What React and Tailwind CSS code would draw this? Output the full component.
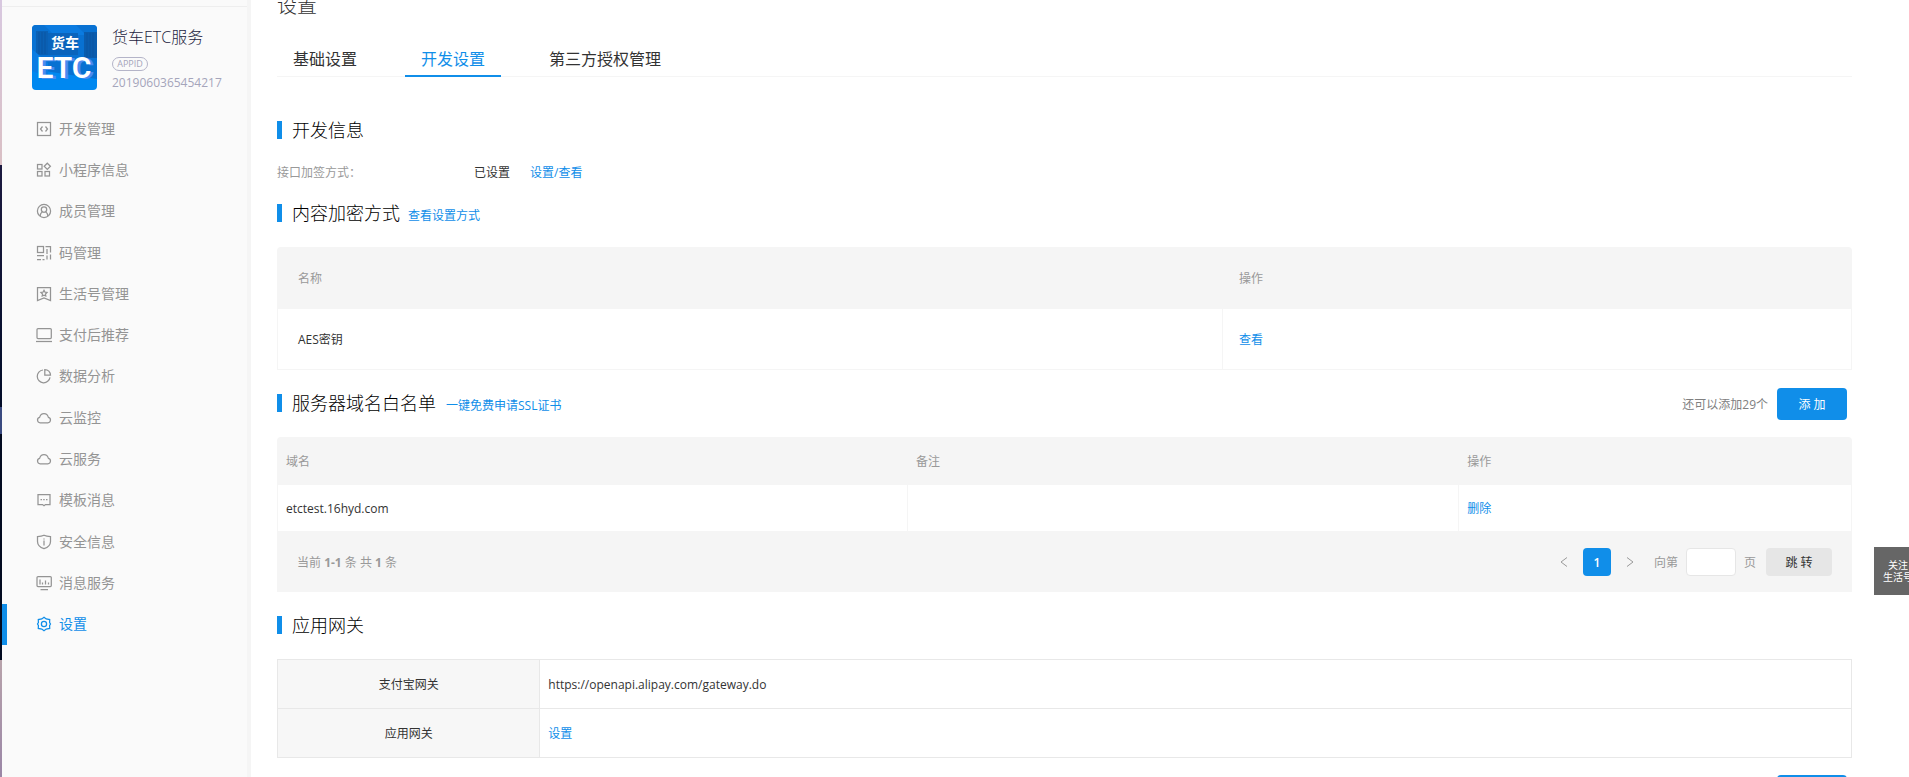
import React from "react";

const base = {
  width: 16,
  height: 16,
  viewBox: "0 0 16 16",
  fill: "none",
  stroke: "currentColor",
  strokeWidth: 1.25,
};

const cloud = (
  <svg {...base}>
    <path d="M4.2 12.8h7.6a2.800 2.800 0 0 0 .6-5.500C11.800 5 10.200 3.500 8 3.500S4.200 5 3.600 7.300a2.800 2.800 0 0 0 .6 5.500Z" />
  </svg>
);

const menus = [
  {
    name: "开发管理",
    icon: (
      <svg {...base}>
        <rect x="1.5" y="1.5" width="13" height="13" />
        <path d="M6.5 5.500 4.500 8l2 2.500M9.500 5.500l2 2.500-2 2.500" />
      </svg>
    ),
  },
  {
    name: "小程序信息",
    icon: (
      <svg {...base}>
        <rect x="1.5" y="2.500" width="4.500" height="4.500" />
        <rect x="1.5" y="9.500" width="4.500" height="4.500" />
        <rect x="9" y="9.500" width="4.500" height="4.500" />
        <path d="M11.3 1.200 14.400 4.300 11.300 7.400 8.200 4.300Z" />
      </svg>
    ),
  },
  {
    name: "成员管理",
    icon: (
      <svg {...base}>
        <circle cx="8" cy="8" r="6.600" />
        <circle cx="8" cy="6.600" r="2.700" />
        <path d="M4.200 13c0-2.200.9-3.500 2.300-4M11.800 13c0-2.200-.9-3.500-2.300-4" />
      </svg>
    ),
  },
  {
    name: "码管理",
    icon: (
      <svg {...base}>
        <rect x="1.500" y="1.500" width="6" height="6" />
        <path d="M9.500 1.500h5M14.500 1v6.500M11 4v5M11 10.500v4M14.500 9.500v5M1 10.500h7M1 14.500h4M6.500 14.500h2" />
      </svg>
    ),
  },
  {
    name: "生活号管理",
    icon: (
      <svg {...base}>
        <path d="M1.500 1.500h13v13L8 12l-6.500 2.500Z" />
        <path d="M8 4.300 9 6.200l2 .3-1.500 1.500.3 2L8 9.100 6.200 10l.3-2L5 6.500l2-.3Z" />
      </svg>
    ),
  },
  {
    name: "支付后推荐",
    icon: (
      <svg {...base}>
        <rect x="1" y="1.500" width="14.300" height="10" rx="1" />
        <path d="M0 14.500h16" />
      </svg>
    ),
  },
  {
    name: "数据分析",
    icon: (
      <svg {...base}>
        <path d="M7 2A6.400 6.400 0 1 0 14 9.300" />
        <path d="M8.800 1.500V7.200h5.700C14.500 4 12 1.500 8.800 1.500Z" />
      </svg>
    ),
  },
  { name: "云监控", icon: cloud },
  { name: "云服务", icon: cloud },
  {
    name: "模板消息",
    icon: (
      <svg {...base}>
        <path d="M2 2.500h12v10H9.500L8 13.700 6.500 12.500H2Z" />
        <path d="M4.500 7.500h1.500M7.200 7.500h1.500M10 7.500h1.500" />
      </svg>
    ),
  },
  {
    name: "安全信息",
    icon: (
      <svg {...base}>
        <path d="M8 1.300c2 1 4.200 1.200 6.500 1.200v5c0 3.500-2.500 5.800-6.500 7.200-4-1.400-6.500-3.700-6.500-7.200v-5C3.800 2.500 6 2.300 8 1.300Z" />
        <path d="M8 4.500v1M8 6.500v5" />
      </svg>
    ),
  },
  {
    name: "消息服务",
    icon: (
      <svg {...base}>
        <rect x="1" y="1.500" width="14.300" height="10" rx="1" />
        <path d="M4 9.500v-5M6.500 9.500V7.500M9.500 9.500v-4M12.500 9.500V7.500M4.500 14.500h7.500" />
      </svg>
    ),
  },
  {
    name: "设置",
    active: true,
    icon: (
      <svg {...base}>
        <path d="M8 1.200 10.200 2.900l3.500.7-.1 2.900.9 1.500-.9 1.500.1 2.900-3.500.7L8 14.800l-2.200-1.700-3.500-.7.1-2.900L1.500 8l.9-1.500-.1-2.900 3.500-.7Z" />
        <circle cx="8" cy="8" r="2.600" />
      </svg>
    ),
  },
];

const tabs = [
  { name: "基础设置" },
  { name: "开发设置", active: true },
  { name: "第三方授权管理" },
];

const domains = [{ domain: "etctest.16hyd.com", remark: "" }];

function Link({ children }) {
  return (
    <a href="#" className="text-xs text-[#108ee9]">
      {children}
    </a>
  );
}

function SectionTitle({ title, children }) {
  return (
    <div className="flex h-8 items-center">
      <span className="mr-2.5 h-[18px] w-[5px] bg-[#108ee9]" />
      <h2 className="text-lg leading-8 font-light text-black">{title}</h2>
      {children}
    </div>
  );
}

function AppLogo() {
  return (
    <svg width="65" height="65" viewBox="0 0 65 65" className="rounded">
      <rect width="65" height="65" fill="#0088f0" />
      <path d="M0 0h65v54L0 44Z" fill="#0871d2" />
      <path d="M4 6h12v24H4Z" fill="#0a60b4" />
      <path d="M12 0h32l10 10H22Z" fill="#0b7be0" />
      <path d="M16 8h30v22H16Z" fill="#0a64bc" />
      <path d="M52 7h13v26H52Z" fill="#0a5cae" />
      <path d="M7 7v22M10 7v22M13 7v22M55 8v24M58 8v24M61 8v24" stroke="#0a55a2" />
      <path d="M0 24 16 38v14L0 46Z" fill="#0a7de4" />
      <text
        x="33"
        y="23"
        textAnchor="middle"
        fill="#fff"
        fontSize="14"
        fontWeight="700"
        fontFamily="Noto Sans CJK SC, sans-serif"
      >
        货车
      </text>
      <g fontSize="30" fontWeight="600" fontFamily="Roboto, sans-serif" textAnchor="middle">
        <text x="35" y="54" fill="#4a8cf0">
          ETC
        </text>
        <text x="32" y="53" fill="#fff">
          ETC
        </text>
      </g>
    </svg>
  );
}

function Sidebar() {
  return (
    <aside className="flex shrink-0">
      {/* desktop showing through at the window edge */}
      <div className="flex w-0.5 flex-col">
        <div className="h-[165px] bg-linear-to-b from-[#d8c8e0] to-[#d9bfc4]" />
        <div className="h-[242px] bg-linear-to-b from-[#1c1a40] to-[#020c28]" />
        <div className="h-[27px] bg-[#3a4a80]" />
        <div className="h-[226px] bg-[#020a20]" />
        <div className="flex-1 bg-linear-to-b from-[#b8a3ab] to-[#9a86a6]" />
      </div>
      <div className="w-[245px] bg-[#fafafa]">
        <div className="h-[7px] border-b border-[#eee]" />
        <div className="mt-[18px] flex gap-[15px] pl-[30px]">
          <AppLogo />
          <div>
            <p className="text-base leading-6 font-light text-[#1c1c40]">货车ETC服务</p>
            <span className="mt-2 block w-9 rounded-full border border-[#b4b4c8] text-center text-[9px] leading-3 text-[#a5a5bb]">
              APPID
            </span>
            <p className="mt-1 text-xs leading-4 text-[#a5a5bb]">2019060365454217</p>
          </div>
        </div>
        <nav className="mt-[17px] grid h-[537px] auto-rows-fr">
          {menus.map((menu) => (
            <a
              key={menu.name}
              href="#"
              className={`flex items-center gap-[7px] border-l-[5px] pl-[29px] text-sm ${
                menu.active
                  ? "border-[#108ee9] text-[#108ee9]"
                  : "border-transparent text-[#949494]"
              }`}
            >
              {menu.icon}
              {menu.name}
            </a>
          ))}
        </nav>
      </div>
      <div className="w-1 bg-[#f5f5f5]" />
    </aside>
  );
}

function App() {
  return (
    <div className="flex h-screen overflow-hidden bg-white font-['Open_Sans','Noto_Sans_CJK_SC',sans-serif] text-[#333]">
      <Sidebar />
      <main className="-mt-2 min-w-0 flex-1 pr-[57px] pl-[26px]">
        <h1 className="text-xl leading-7 font-light">设置</h1>

        <div className="mt-4 flex h-[41px] gap-8 border-b border-[#f5f5f5]">
          {tabs.map((tab) => (
            <button
              key={tab.name}
              type="button"
              className={`h-[41px] border-b-2 px-4 pt-1.5 text-base leading-6 ${
                tab.active
                  ? "border-[#108ee9] text-[#108ee9]"
                  : "border-transparent"
              }`}
            >
              {tab.name}
            </button>
          ))}
        </div>

        <div className="mt-[37px]">
          <SectionTitle title="开发信息" />
        </div>
        <div className="mt-[17px] flex h-5 items-center text-xs">
          <span className="w-[197px] text-[#999]">接口加签方式：</span>
          <span className="mr-5">已设置</span>
          <Link>设置/查看</Link>
        </div>

        <div className="mt-[14px] flex">
          <SectionTitle title="内容加密方式">
            <span className="ml-2 pt-0.5">
              <Link>查看设置方式</Link>
            </span>
          </SectionTitle>
        </div>
        <table className="mt-[18px] w-full table-fixed border-separate border-spacing-0 overflow-hidden rounded-t text-left text-xs">
          <thead className="bg-[#f5f5f5] text-[#999]">
            <tr className="h-[62px]">
              <th className="w-3/5 pt-0.5 pl-[21px] font-normal">名称</th>
              <th className="pt-0.5 pl-[17px] font-normal">操作</th>
            </tr>
          </thead>
          <tbody>
            <tr className="h-[61px]">
              <td className="border-b border-l border-[#f5f5f5] pt-0.5 pl-5">AES密钥</td>
              <td className="border-x border-b border-[#f5f5f5] pt-0.5 pl-4">
                <Link>查看</Link>
              </td>
            </tr>
          </tbody>
        </table>

        <div className="mt-[17px] flex items-start justify-between pr-[5px]">
          <SectionTitle title="服务器域名白名单">
            <span className="ml-2.5 pt-0.5">
              <Link>一键免费申请SSL证书</Link>
            </span>
          </SectionTitle>
          <div className="mt-px flex items-center gap-[9px]">
            <span className="pt-0.5 text-xs text-[#808080]">还可以添加29个</span>
            <button
              type="button"
              className="h-8 w-[70px] rounded bg-[#108ee9] pt-0.5 text-xs text-white"
            >
              添 加
            </button>
          </div>
        </div>
        <div className="mt-[17px] overflow-hidden rounded-t">
          <table className="w-full table-fixed border-separate border-spacing-0 text-left text-xs">
            <thead className="bg-[#f5f5f5] text-[#999]">
              <tr className="h-12">
                <th className="w-2/5 pt-0.5 pl-[9px] font-normal">域名</th>
                <th className="w-[35%] pt-0.5 pl-[9px] font-normal">备注</th>
                <th className="pt-0.5 pl-[9px] font-normal">操作</th>
              </tr>
            </thead>
            <tbody>
              {domains.map((item) => (
                <tr key={item.domain} className="h-[46px]">
                  <td className="border-l border-[#f5f5f5] pt-0.5 pl-2">{item.domain}</td>
                  <td className="border-l border-[#f5f5f5] pt-0.5 pl-2">{item.remark}</td>
                  <td className="border-x border-[#f5f5f5] pt-0.5 pl-2">
                    <Link>删除</Link>
                  </td>
                </tr>
              ))}
            </tbody>
          </table>
          <div className="flex h-[61px] items-center justify-between bg-[#f5f5f5] pr-5 pl-5 text-xs text-[#999]">
            <p className="pt-0.5">
              当前 <b>1-1</b> 条 共 <b>1</b> 条
            </p>
            <div className="flex items-center">
              <button type="button" aria-label="上一页" className="px-[15px]">
                <svg width="8" height="10" viewBox="0 0 8 10" fill="none" stroke="currentColor">
                  <path d="M7 .5 1 5l6 4.500" />
                </svg>
              </button>
              <button type="button" className="h-7 w-7 rounded bg-[#108ee9] pt-0.5 font-semibold text-white">
                1
              </button>
              <button type="button" aria-label="下一页" className="px-[15px]">
                <svg width="8" height="10" viewBox="0 0 8 10" fill="none" stroke="currentColor">
                  <path d="M1 .5 7 5 1 9.500" />
                </svg>
              </button>
              <label htmlFor="page" className="ml-[5px] pt-0.5">
                向第
              </label>
              <input
                id="page"
                type="text"
                className="mx-2 h-7 w-[50px] rounded border border-[#e6e6e6] bg-white px-2"
              />
              <span className="pt-0.5">页</span>
              <button
                type="button"
                className="ml-[10px] h-7 w-[66px] rounded bg-[#e6e6e6] pt-0.5 text-[#333]"
              >
                跳 转
              </button>
            </div>
          </div>
        </div>

        <div className="mt-[17px]">
          <SectionTitle title="应用网关" />
        </div>
        <table className="mt-[18px] w-full table-fixed border-collapse text-xs">
          <tbody>
            <tr className="h-[49px]">
              <th className="w-1/6 border border-[#e8e8e8] bg-[#f7f7f7] pt-0.5 font-normal">
                支付宝网关
              </th>
              <td className="border border-[#e8e8e8] pt-0.5 pl-2">
                https://openapi.alipay.com/gateway.do
              </td>
            </tr>
            <tr className="h-[49px]">
              <th className="w-1/6 border border-[#e8e8e8] bg-[#f7f7f7] pt-0.5 font-normal">
                应用网关
              </th>
              <td className="border border-[#e8e8e8] pt-0.5 pl-2">
                <Link>设置</Link>
              </td>
            </tr>
          </tbody>
        </table>
        <div className="mt-[17px] flex justify-end pr-[5px]">
          <button
            type="button"
            aria-label="添加"
            className="h-8 w-[70px] rounded bg-[#108ee9]"
          />
        </div>
      </main>

      <a
        href="#"
        className="fixed top-[547px] -right-[13px] flex h-12 w-12 flex-col items-center justify-center bg-[#666] text-[10px] leading-3 text-white"
      >
        <span>关注</span>
        <span>生活号</span>
      </a>
    </div>
  );
}

export default App;
